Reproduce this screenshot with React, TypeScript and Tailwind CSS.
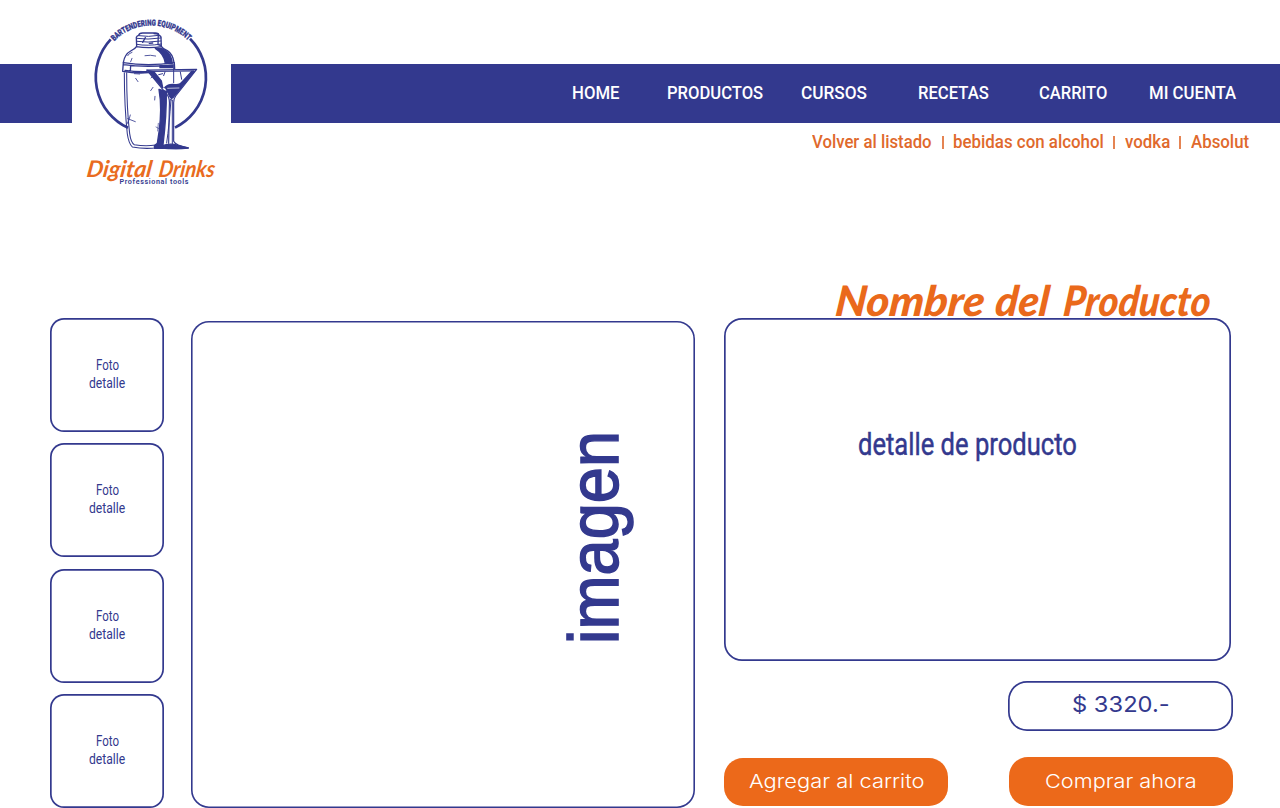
import { useLayoutEffect, useRef, useState } from "react";

type FitTextProps = {
  children: string;
  className?: string;
  vertical?: boolean;
};

/* Condenses or widens a single line so that it fills the width (or height) of its box. */
function FitText({ children, className = "", vertical = false }: FitTextProps) {
  const box = useRef<HTMLSpanElement>(null);
  const line = useRef<HTMLSpanElement>(null);
  const [scale, setScale] = useState(1);

  useLayoutEffect(() => {
    if (!box.current || !line.current) return;
    setScale(
      vertical
        ? box.current.offsetHeight / line.current.offsetHeight
        : box.current.offsetWidth / line.current.offsetWidth
    );
  }, [children, vertical]);

  return (
    <span ref={box} className={`shrink-0 text-left ${vertical ? "flex items-center" : "block"} ${className}`}>
      <span
        ref={line}
        className={
          vertical
            ? "shrink-0 whitespace-nowrap leading-none [writing-mode:vertical-rl]"
            : "inline-block origin-left whitespace-nowrap"
        }
        style={{ transform: vertical ? `scaleY(${scale}) rotate(180deg)` : `scaleX(${scale})` }}
      >
        {children}
      </span>
    </span>
  );
}

function Logo() {
  return (
    <svg viewBox="72 10 159 180" className="h-[180px] w-[159px]" role="img" aria-label="Digital Drinks">
      <defs>
        <path id="arc" d="M114.2 41.2 A52.2 52.2 0 0 1 188.8 41.2" />
      </defs>
      <path d="M110.7 39.3 A55.7 55.7 0 0 0 128 127.8" fill="none" stroke="#33398e" strokeWidth="2.7" />
      <path d="M190 38.7 A55.7 55.7 0 0 1 175 127.6" fill="none" stroke="#33398e" strokeWidth="2.7" />
      <text fill="#33398e" stroke="#33398e" strokeWidth=".3" fontFamily="Roboto, sans-serif" fontWeight="900" fontSize="8.4">
        <textPath href="#arc" startOffset="0" textLength="82" lengthAdjust="spacingAndGlyphs">
          BARTENDERING EQUIPMENT
        </textPath>
      </text>
      <g transform="translate(110 28) scale(.3333)" fill="none" stroke="#33398e" strokeWidth="4" strokeLinecap="round" strokeLinejoin="round">
        {/* cap */}
        <path d="M80 55 L79 28 Q81 23 86 22 Q87 15 98 15 L136 15 Q146 15 147 22 Q154 24 153 30 L154 55" />
        <path d="M86 23 Q115 28 147 22 M79 31 Q112 36 153 30 M80 40 Q112 45 153 39 M80 49 Q112 55 154 48" strokeWidth="3" />
        <path d="M132 17 L145 18 L144 50 L151 52 M98 43 L106 29 M118 46 L128 45" strokeWidth="4" />
        {/* shoulder */}
        <path d="M80 55 Q76 62 62 69 Q44 79 40 103 M154 55 Q158 62 172 68 Q188 78 192 103 M79 56 Q116 62 155 56" />
        <path d="M136 61 Q157 58 166 68 Q184 78 187 106 L166 106 Q163 78 136 61Z" fill="#33398e" />
        <path d="M53 83 Q56 76 66 73 M105 83 Q122 80 137 84 M66 91 L62 101" strokeWidth="2.5" />
        {/* collar */}
        <path d="M40 104 Q115 116 193 104 L194 122 M40 104 L38 130 Q76 137 117 134 M41 110 Q105 119 190 111 M45 127 Q76 132 111 131 M62 112 L61 130" />
        <path d="M150 113 L188 112 L188 119 L150 119Z" fill="#33398e" />
        {/* body */}
        <path d="M43 134 Q43 234 52 318 Q56 346 67 357 Q104 364 143 359 M50 134 Q50 242 59 317 Q63 345 73 350 Q106 356 137 351" strokeWidth="3.2" />
        <path d="M53 272 L76 281 M61 261 Q57 280 51 288 M77 151 L84 161 M133 140 L123 150 M129 178 L122 188 M135 205 L134 216 M73 137 L89 138" strokeWidth="2.5" />
        <path d="M147 184 L169 190 Q170 261 159 351 L165 361 L134 361 L133 353 L142 346 Q155 271 151 216Z" fill="#33398e" />
        <path d="M145 286 L143 309 M138 297 L149 303" strokeWidth="2" />
        {/* martini glass */}
        <path d="M110 126 L260 124 L197 204 Q191 212 191 224 L191 340 Q196 352 235 360 Q200 364 157 360 M110 126 L173 202 Q180 212 178 237 L176 346 M118 130 L252 129" strokeWidth="3.5" />
        <path d="M245 130 L217 161 Q211 172 190 169 Q174 168 166 177 L176 199 Q184 220 193 204 L253 130Z" fill="#33398e" />
        <path d="M112 127 L158 179 L154 159 L132 132Z" fill="#33398e" />
        <path d="M162 179 Q190 186 215 173 M211 132 L215 154 M191 114 L191 164 M165 132 L161 143 M146 140 L158 137 M181 215 L188 217" strokeWidth="3" />
        <path d="M183 213 Q178 290 170 345 M187 219 L187 349" strokeWidth="3" />
        <path d="M154 354 Q181 344 203 352 L235 360 Q197 363 154 360Z" fill="#33398e" />
        <path d="M173 181 L207 180" stroke="white" strokeWidth="2" />
      </g>
      <g fill="#e96b20" fontFamily="Lato, sans-serif" fontWeight="700" fontStyle="italic" fontSize="23">
        <text transform="translate(86 177) skewX(-8)" textLength="65" lengthAdjust="spacingAndGlyphs">Digital</text>
        <text transform="translate(158 176.5) skewX(-8)" textLength="56" lengthAdjust="spacingAndGlyphs">Drinks</text>
      </g>
      <text x="119.5" y="184.2" fill="#33398e" fontFamily="Roboto, sans-serif" fontWeight="600" fontSize="7.2" textLength="69" lengthAdjust="spacing">
        Professional tools
      </text>
    </svg>
  );
}

function Thumbnail() {
  return (
    <div className="flex h-[114px] w-[114px] flex-col items-center rounded-[14px] pt-[39px] text-[14.5px] leading-[18px] shadow-[inset_0_0_0_1.7px_#33398e]">
      <FitText className="w-[23px]">Foto</FitText>
      <FitText className="w-[36px]">detalle</FitText>
    </div>
  );
}

export default function App() {
  return (
    <div className="h-[808px] w-[1280px] overflow-hidden bg-white font-[Roboto,sans-serif] text-[#33398e]">
      <header className="h-[318px] pt-16">
        <div className="flex h-[59px]">
          <div className="w-[72px] bg-[#33398e]" />
          <div className="relative w-[159px]">
            <a href="#" className="absolute left-0 -top-[54px]">
              <Logo />
            </a>
          </div>
          <nav className="flex flex-1 items-center bg-[#33398e] pb-[2px] pl-[341px] text-[18.5px] font-medium leading-6 text-white">
            <FitText className="w-[48px]">HOME</FitText>
            <FitText className="ml-[47px] w-[96px]">PRODUCTOS</FitText>
            <FitText className="ml-[38px] w-[66px]">CURSOS</FitText>
            <FitText className="ml-[51px] w-[71px]">RECETAS</FitText>
            <FitText className="ml-[50px] w-[68px]">CARRITO</FitText>
            <FitText className="ml-[42px] w-[87px]">MI CUENTA</FitText>
          </nav>
        </div>
        <div className="flex pl-[812px] pt-[7px] text-[18px] font-medium leading-6 text-[#e0692c]">
          <FitText className="w-[120px]">Volver al listado</FitText>
          <span className="ml-[10px] mt-[6px] h-[13px] w-[2px] bg-[#e58453]" />
          <FitText className="ml-[9px] w-[151px]">bebidas con alcohol</FitText>
          <span className="ml-[9px] mt-[6px] h-[13px] w-[2px] bg-[#e58453]" />
          <FitText className="ml-[10px] w-[45px]">vodka</FitText>
          <span className="ml-[9px] mt-[6px] h-[13px] w-[2px] bg-[#e58453]" />
          <FitText className="ml-[10px] w-[58px]">Absolut</FitText>
        </div>
      </header>

      <main className="flex pl-[50px]">
        <div className="flex flex-col gap-[11.4px]">
          <Thumbnail />
          <Thumbnail />
          <Thumbnail />
          <Thumbnail />
        </div>

        <section className="ml-[27px] mt-[3px] flex h-[487px] w-[504px] justify-end rounded-[18px] pr-[66px] pt-[110px] shadow-[inset_0_0_0_1.6px_#33398e]">
          <FitText vertical className="h-[213px] w-[71px] text-[71px] [-webkit-text-stroke:1.6px_#33398e] font-['Liberation_Sans',sans-serif]">
            imagen
          </FitText>
        </section>

        <section className="ml-[29px] w-[509px]">
          <div className="relative h-[343px] w-[507px] rounded-[18px] pl-[134px] pt-[104px] text-[32px] leading-[44px] shadow-[inset_0_0_0_1.7px_#33398e]">
            <h1 className="absolute left-[112px] -top-[43px] text-[42px] font-black italic leading-[50px] text-[#ea691b] font-[Lato,sans-serif]">
              <span className="flex -skew-x-6">
                <FitText className="w-[149px]">Nombre</FitText>
                <FitText className="ml-[11px] w-[54px]">del</FitText>
                <FitText className="ml-[14px] w-[147px]">Producto</FitText>
              </span>
            </h1>
            <FitText className="w-[219px] [-webkit-text-stroke:0.5px_#33398e]">detalle de producto</FitText>
          </div>
          <div className="ml-[284px] mt-[20px] flex h-[50px] w-[225px] justify-center rounded-[19px] pt-[7px] text-[22px] leading-8 shadow-[inset_0_0_0_1.7px_#33398e] font-[Inter,sans-serif]">
            <FitText className="w-[98px]">$ 3320.-</FitText>
          </div>
          <div className="mt-[26px] flex justify-between text-[19px] font-light text-white font-[Inter,sans-serif]">
            <button className="mt-px flex h-[48px] w-[224px] items-center justify-center rounded-[19px] bg-[#ec691a] pt-px">
              <FitText className="w-[175px]">Agregar al carrito</FitText>
            </button>
            <button className="flex h-[49px] w-[224px] items-center justify-center rounded-[19px] bg-[#ec691a] pt-px">
              <FitText className="w-[152px]">Comprar ahora</FitText>
            </button>
          </div>
        </section>
      </main>
    </div>
  );
}
